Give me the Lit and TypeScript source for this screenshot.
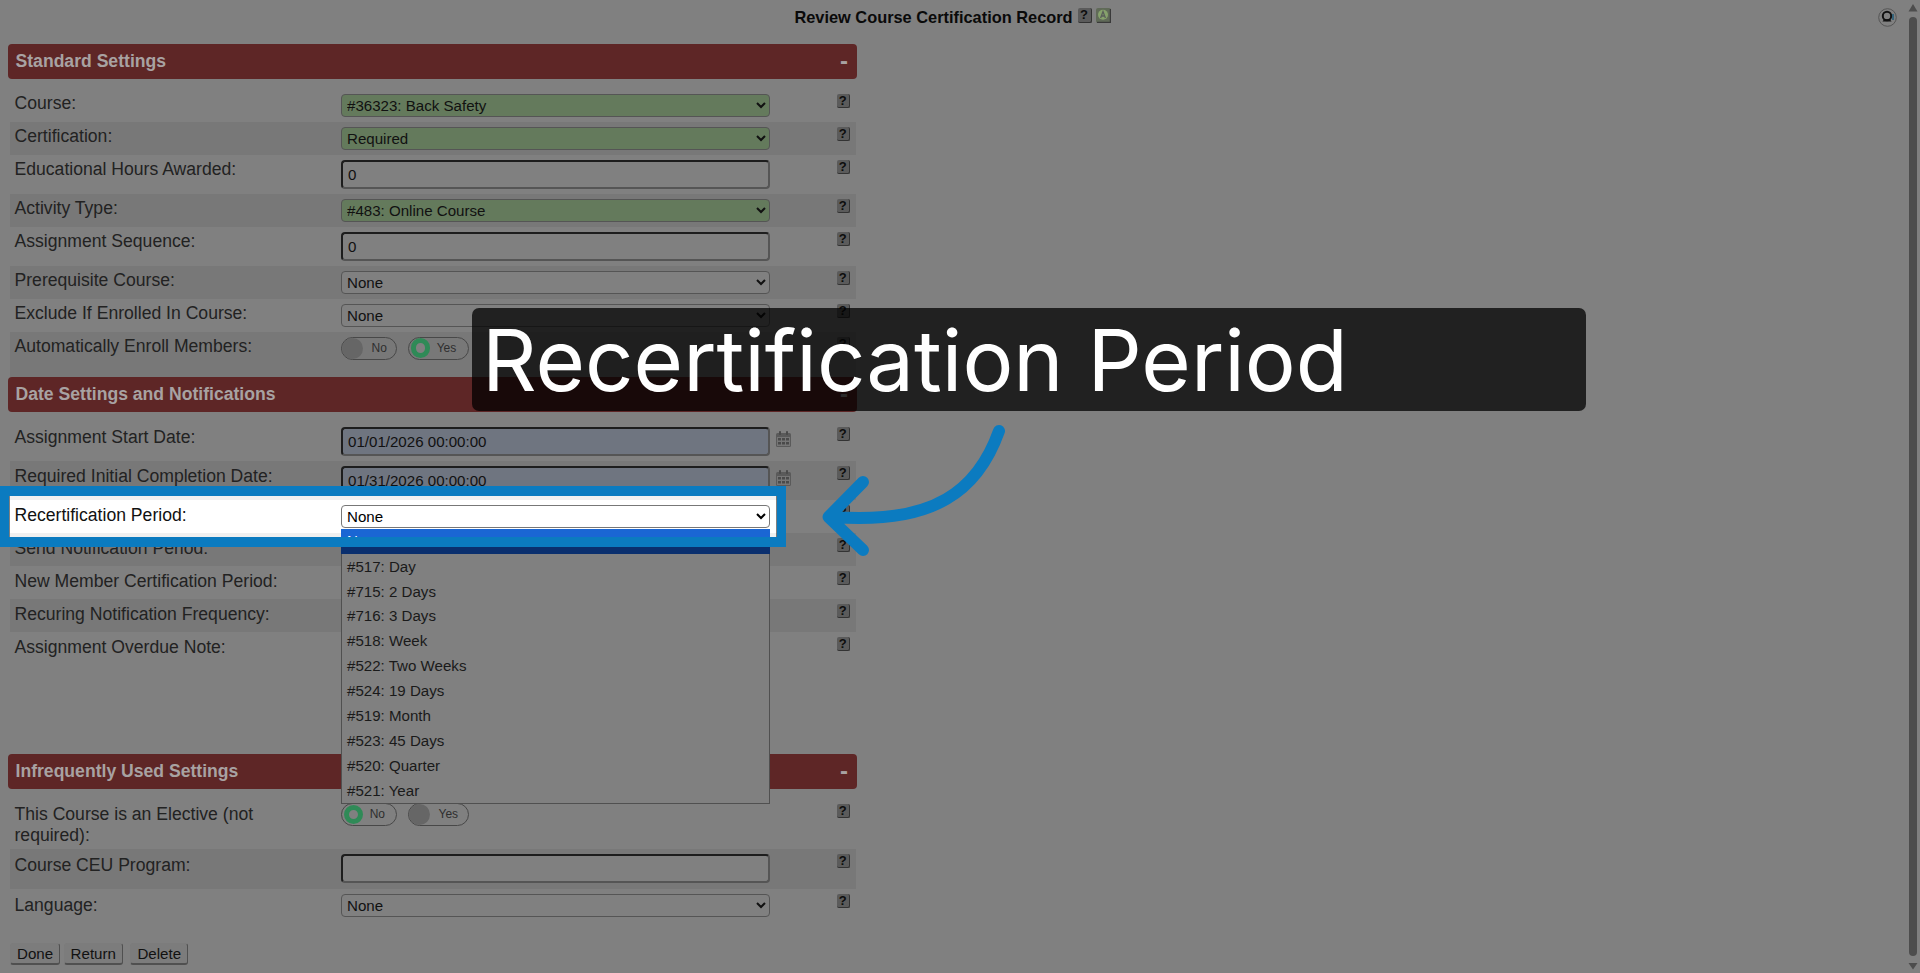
import { LitElement, html, css, nothing } from "lit";
import { customElement } from "lit/decorators.js";

type Row = {
  label: string;
  kind: "select" | "input" | "date" | "toggle" | "area";
  value?: string;
  green?: boolean;
  alt?: boolean;
  on?: "No" | "Yes";
  extra?: string;
};

const std: Row[] = [
  { label: "Course:", kind: "select", value: "#36323: Back Safety", green: true },
  { label: "Certification:", kind: "select", value: "Required", green: true, alt: true },
  { label: "Educational Hours Awarded:", kind: "input", value: "0" },
  { label: "Activity Type:", kind: "select", value: "#483: Online Course", green: true, alt: true },
  { label: "Assignment Sequence:", kind: "input", value: "0" },
  { label: "Prerequisite Course:", kind: "select", value: "None", alt: true },
  { label: "Exclude If Enrolled In Course:", kind: "select", value: "None" },
  { label: "Automatically Enroll Members:", kind: "toggle", on: "Yes", alt: true, extra: "enroll" },
];
const dates: Row[] = [
  { label: "Assignment Start Date:", kind: "date", value: "01/01/2026 00:00:00" },
  { label: "Required Initial Completion Date:", kind: "date", value: "01/31/2026 00:00:00", alt: true, extra: "before" },
  { label: "Recertification Period:", kind: "select", value: "None", extra: "focus" },
  { label: "Send Notification Period:", kind: "select", value: "None", alt: true, extra: "after" },
  { label: "New Member Certification Period:", kind: "select", value: "None" },
  { label: "Recuring Notification Frequency:", kind: "select", value: "None", alt: true },
  { label: "Assignment Overdue Note:", kind: "area", extra: "note" },
];
const rare: Row[] = [
  { label: "This Course is an Elective (not required):", kind: "toggle", on: "No", extra: "elective" },
  { label: "Course CEU Program:", kind: "input", value: "", alt: true, extra: "ceu" },
  { label: "Language:", kind: "select", value: "None", extra: "lang" },
];
const options = [
  "#517: Day", "#715: 2 Days", "#716: 3 Days", "#518: Week", "#522: Two Weeks",
  "#524: 19 Days", "#519: Month", "#523: 45 Days", "#520: Quarter", "#521: Year",
];

@customElement("app-root")
export class AppRoot extends LitElement {
  static styles = css`
    :host {
      display: block;
      position: relative;
      width: 1920px;
      height: 973px;
      overflow: hidden;
      background: #808080;
      font-family: "Liberation Sans", Arial, sans-serif;
      color: #222;
    }
    .title {
      width: 1905px;
      height: 44px;
      display: flex;
      justify-content: center;
      align-items: flex-start;
      gap: 4px;
      padding-top: 8px;
      box-sizing: border-box;
      font: bold 16.36px/18px "Liberation Sans", Arial, sans-serif;
      color: #0a0a0a;
    }
    .title-text { margin-right: 1px; }
    .section { width: 849.5px; margin-left: 7.5px; }
    .head {
      height: 35px;
      border-radius: 4px;
      background: #5e2626;
      color: #a8a2a2;
      font: bold 17.6px/35px "Liberation Sans", Arial, sans-serif;
      padding: 0 9px 0 8px;
      display: flex;
      justify-content: space-between;
    }
    .dash { font-size: 24px; line-height: 33px; }
    .rows { margin: 10px 1.5px 0 2.5px; }
    .rows.d2 { margin-bottom: 2px; }
    .row {
      display: grid;
      grid-template-columns: 331px 429px 1fr;
      padding: 4.5px 0 5px;
      font-size: 17.6px;
      line-height: 21px;
    }
    .row.alt { background: #787878; }
    .label { padding: 0 20px 0 4.5px; margin-top: -1px; }
    .rows.d2 .label { margin-top: 0; }
    select, input[type="text"] {
      font: 15.1px "Liberation Sans", Arial, sans-serif;
      color: #111;
      box-sizing: border-box;
      width: 429px;
      margin: 0;
      display: block;
      border-radius: 4px;
    }
    select {
      height: 23.5px;
      padding: 0 0 0 1px;
      background-color: #808080;
      border: 1px solid #555;
    }
    select.green { background-color: #647a5c; }
    input[type="text"] {
      height: 29.5px;
      padding: 0 5px;
      background: #808080;
      border-style: solid;
      border-width: 2px;
      border-color: #1d1d1d #555 #555 #1d1d1d;
    }
    input.date { background: #6f7580; }
    .side { display: flex; align-items: flex-start; padding-left: 6px; }
    .help {
      margin-left: auto;
      margin-right: 5.5px;
      box-sizing: border-box;
      width: 13.5px;
      height: 14px;
      border-radius: 2px;
      background: #5b5b5b;
      border-right: 1px solid #333;
      border-bottom: 1px solid #333;
      color: #0d0d0d;
      font: bold 13px/13px "Liberation Sans", Arial, sans-serif;
      text-align: center;
      flex: none;
    }
    .title .help { margin: 0; height: 14.5px; width: 14px; }
    .aicon { flex: none; margin-top: 0; display: block; }
    .cal { display: block; flex: none; margin-top: 4px; }
    .togs { display: flex; gap: 11px; }
    .tog {
      box-sizing: border-box;
      height: 23px;
      width: 56px;
      border: 1px solid #484848;
      border-radius: 12px;
      display: flex;
      align-items: center;
      font-size: 12px;
      color: #2e2e2e;
    }
    .tog.yes { width: 60.5px; }
    .knob {
      width: 21px;
      height: 21px;
      border-radius: 50%;
      background: #666;
      flex: none;
      margin-right: 8.5px;
      box-sizing: border-box;
    }
    .knob.on {
      width: 19.5px;
      height: 19.5px;
      background: #808080;
      border: 5.8px solid #2f8a57;
      margin-left: 1.7px;
      margin-right: 6.5px;
    }
    .row.enroll { padding-bottom: 17.5px; }
    .row.elective { padding: 4px 0 3px; }
    .row.elective .label { margin-top: 1px; }
    .row.elective .help { margin-top: 1px; }
    .row.ceu { padding-bottom: 6px; }
    .row.ceu .label, .row.lang .label { margin-top: 1px; }
    .row.note { height: 120px; box-sizing: border-box; }
    .row.focus {
      background: linear-gradient(to right, #fff 766px, #808080 766px);
    }
    .row.focus .label { color: #111; }
    .row.focus select { background-color: #fff; color: #000; border-color: #777; }
    .row.before {
      background: linear-gradient(#f0f0f0, #f0f0f0) left bottom / 766px 4px no-repeat, #787878;
    }
    .row.after {
      background: linear-gradient(#f0f0f0, #f0f0f0) left top / 766px 4.3px no-repeat, #787878;
    }
    .row .area { height: 110px; }
    .buttons { display: flex; gap: 3.5px; margin: 21px 0 0 10px; }
    .buttons button:last-child { margin-left: 4px; }
    button {
      font: 15.1px "Liberation Sans", Arial, sans-serif;
      color: #111;
      height: 22px;
      padding: 0 6px;
      background: #7c7c7c;
      border: 1px solid #7c7c7c;
      border-right-color: #505050;
      border-bottom: 2px solid #505050;
      border-radius: 3px;
    }
    .menu {
      position: absolute;
      left: 341px;
      top: 528.7px;
      width: 429px;
      height: 275px;
      box-sizing: border-box;
      background: #808080;
      border: 1px solid #505050;
      border-top: none;
      font-size: 15.1px;
      color: #1a1a1a;
      z-index: 2;
    }
    .opt { height: 24.9px; line-height: 25.9px; padding-left: 5px; }
    .opt.sel {
      height: 25px;
      line-height: 24px;
      color: #fff;
      background: linear-gradient(#1a66d4 0 12px, #0a2f6e 12px);
      margin: 0 -1px 0 -1px;
      padding-left: 6px;
    }
    .frame {
      position: absolute;
      left: 0;
      top: 485.7px;
      width: 785.7px;
      height: 61.6px;
      box-sizing: border-box;
      border: solid #0b7bc0;
      border-width: 10.3px 9.7px 10px 9.3px;
      z-index: 3;
    }
    .banner {
      position: absolute;
      left: 472px;
      top: 308px;
      width: 1114px;
      height: 103px;
      box-sizing: border-box;
      padding-left: 10px;
      border-radius: 7px;
      background: rgba(0, 0, 0, 0.74);
      color: #fff;
      font: 400 85px/106px Inter, "Liberation Sans", sans-serif;
      z-index: 4;
      white-space: nowrap;
    }
    .arrow { position: absolute; left: 0; top: 0; z-index: 5; pointer-events: none; }
    .scroll { position: absolute; right: 0; top: 0; width: 15px; height: 973px; z-index: 1; }
    .corner { position: absolute; left: 1878px; top: 8px; z-index: 1; }
  `;

  private helpIcon() {
    return html`<span class="help">?</span>`;
  }

  private calendar() {
    return html`<svg class="cal" width="15" height="16" viewBox="0 0 15 16">
      <rect x="0" y="2" width="15" height="14" rx="1.500" fill="#5a5a5a"/>
      <rect x="1" y="6" width="13" height="9" fill="#767676"/>
      <rect x="3" y="0" width="2" height="4" rx="0.800" fill="#4a4a4a"/>
      <rect x="10" y="0" width="2" height="4" rx="0.800" fill="#4a4a4a"/>
      <g fill="#4a4a4a">
        <rect x="2" y="7" width="3" height="2.500"/><rect x="6" y="7" width="3" height="2.500"/><rect x="10" y="7" width="3" height="2.500"/>
        <rect x="2" y="11" width="3" height="2.500"/><rect x="6" y="11" width="3" height="2.500"/><rect x="10" y="11" width="3" height="2.500"/>
      </g>
    </svg>`;
  }

  private field(r: Row) {
    switch (r.kind) {
      case "select":
        return html`<select class=${r.green ? "green" : ""}><option>${r.value}</option></select>`;
      case "input":
        return html`<input type="text" .value=${r.value ?? ""} />`;
      case "date":
        return html`<input class="date" type="text" .value=${r.value ?? ""} />`;
      case "toggle":
        return html`<div class="togs">
          <div class="tog"><span class="knob ${r.on === "No" ? "on" : ""}"></span>No</div>
          <div class="tog yes"><span class="knob ${r.on === "Yes" ? "on" : ""}"></span>Yes</div>
        </div>`;
      case "area":
        return html`<div class="area"></div>`;
    }
  }

  private rows(list: Row[]) {
    return list.map(
      (r) => html`<div class="row ${r.alt ? "alt" : ""} ${r.extra ?? ""}">
        <div class="label">${r.label}</div>
        <div>${this.field(r)}</div>
        <div class="side">${r.kind === "date" ? this.calendar() : nothing}${this.helpIcon()}</div>
      </div>`
    );
  }

  render() {
    return html`
      <div class="title">
        <span class="title-text">Review Course Certification Record</span>
        ${this.helpIcon()}
        <svg class="aicon" width="15" height="15" viewBox="0 0 15 15">
          <rect x="0" y="0" width="15" height="15" rx="2" fill="#606a58"/>
          <rect x="13.800" y="1" width="1.200" height="14" fill="#3a3a3a"/>
          <rect x="1" y="13.800" width="14" height="1.200" fill="#3a3a3a"/>
          <circle cx="7" cy="6.800" r="5" fill="#86a26c"/>
          <path d="M4.600 10 7 3.600 9.400 10M5.500 8h3" fill="none" stroke="#5a5f5a" stroke-width="1.300"/>
        </svg>
      </div>

      <div class="section">
        <div class="head"><span>Standard Settings</span><span class="dash">-</span></div>
        <div class="rows">${this.rows(std)}</div>
      </div>
      <div class="section">
        <div class="head"><span>Date Settings and Notifications</span><span class="dash">-</span></div>
        <div class="rows d2">${this.rows(dates)}</div>
      </div>
      <div class="section">
        <div class="head"><span>Infrequently Used Settings</span><span class="dash">-</span></div>
        <div class="rows">${this.rows(rare)}</div>
      </div>
      <div class="buttons">
        <button>Done</button><button>Return</button><button>Delete</button>
      </div>

      <div class="menu">
        <div class="opt sel">None</div>
        ${options.map((o) => html`<div class="opt">${o}</div>`)}
      </div>
      <div class="frame"></div>
      <div class="banner">Recertification Period</div>
      <svg class="arrow" width="1920" height="973" viewBox="0 0 1920 973">
        <path d="M999 431C978 490 935 525 832 517M863 482 828.500 517 863 550" fill="none" stroke="#0b7bc0" stroke-width="12" stroke-linecap="round" stroke-linejoin="round"/>
      </svg>

      <svg class="corner" width="19" height="19" viewBox="0 0 19 19">
        <circle cx="9.500" cy="9.500" r="8.800" fill="none" stroke="#555" stroke-width="1"/>
        <circle cx="9" cy="8" r="4.200" fill="none" stroke="#111" stroke-width="2"/>
        <path d="M4.500 13.500c1-3 8-3 9 0z" fill="#111"/>
        <path d="M15 6v6" stroke="#1c5a78" stroke-width="1.500"/>
      </svg>
      <svg class="scroll" width="15" height="973" viewBox="0 0 15 973">
        <path d="M8 4 12.500 11.500H3.500z" fill="#4d4d4d"/>
        <rect x="4" y="17" width="8" height="939" rx="4" fill="#4d4d4d"/>
        <path d="M8 969.500 3.500 963H12.500z" fill="#4d4d4d"/>
      </svg>
    `;
  }
}
